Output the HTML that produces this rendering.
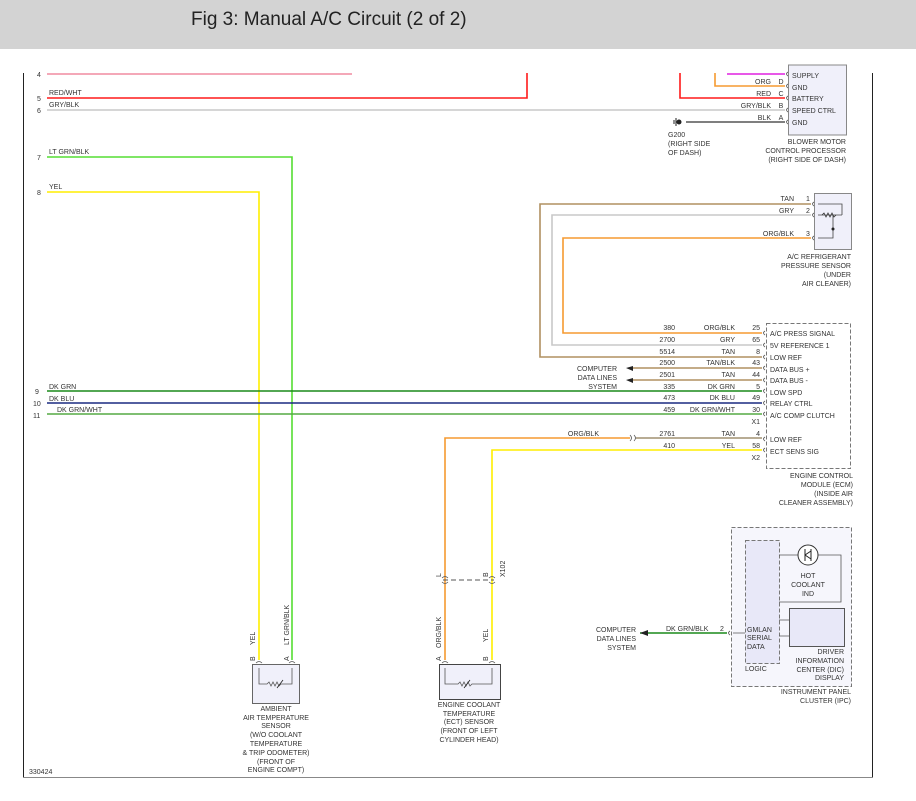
<!DOCTYPE html>
<html><head><meta charset="utf-8"><style>
html,body{margin:0;padding:0;background:#fff;width:916px;height:801px;overflow:hidden}
.hdr{position:absolute;left:0;top:0;width:916px;height:49px;background:#d3d3d3}
.hdr span{position:absolute;left:191px;top:9px;font:19px "Liberation Sans",sans-serif;color:#222}
svg{position:absolute;left:0;top:0}
text{font-family:"Liberation Sans",sans-serif;font-size:7px;fill:#333}
</style></head><body>
<div class="hdr"><span>Fig 3: Manual A/C Circuit (2 of 2)</span></div>
<svg width="916" height="801" viewBox="0 0 916 801">
<line x1="23.5" y1="73" x2="23.5" y2="777" stroke="#222" stroke-width="1"/>
<line x1="872.5" y1="73" x2="872.5" y2="777" stroke="#222" stroke-width="1"/>
<line x1="23" y1="777.5" x2="873" y2="777.5" stroke="#888" stroke-width="1"/>
<g fill="none" stroke-width="1.6">
<path d="M47 74H352" stroke="#f08ca0"/>
<path d="M47 98H527V73" stroke="#ff1a1a"/>
<path d="M47 110H785" stroke="#c8c8c8"/>
<path d="M47 157H292V660" stroke="#55dd33"/>
<path d="M47 192H259V660" stroke="#ffee00"/>
<path d="M680 73V98H785" stroke="#ff1a1a"/>
<path d="M715 73V86H785" stroke="#f59a30"/>
<path d="M727 74H785" stroke="#e020e0"/>
<path d="M686 122H785" stroke="#555"/>
<path d="M811 204H540V357H762" stroke="#b09060"/>
<path d="M811 215H552V345H762" stroke="#c8c8c8"/>
<path d="M811 238H563V333H762" stroke="#f59a30"/>
<path d="M632 368H762M632 380H762" stroke="#b09060"/>
<path d="M47 391H762" stroke="#1a8a1a"/>
<path d="M47 403H762" stroke="#1a2a80"/>
<path d="M47 414H762" stroke="#55aa44"/>
<path d="M445 660V438H630" stroke="#f59a30"/>
<path d="M636 438H762" stroke="#a09070"/>
<path d="M492 660V450H762" stroke="#ffee00"/>
<path d="M640 633H727" stroke="#1a8a1a"/>
</g>
<g fill="none" stroke="#555" stroke-width="0.8">
<path d="M788 72q-3 2 0 4M788 84q-3 2 0 4M788 96q-3 2 0 4M788 108q-3 2 0 4M788 120q-3 2 0 4"/>
<path d="M814 202q-3 2 0 4M814 213q-3 2 0 4M814 236q-3 2 0 4"/>
<path d="M765 331q-3 2 0 4M765 343q-3 2 0 4M765 355q-3 2 0 4M765 366q-3 2 0 4M765 378q-3 2 0 4M765 389q-3 2 0 4M765 401q-3 2 0 4M765 412q-3 2 0 4M765 437q-3 2 0 4M765 448q-3 2 0 4"/>
<path d="M630 435q3 3 0 6M634 435q3 3 0 6"/>
<path d="M442 578q3 -3 6 0M442 582q3 3 6 0M489 578q3 -3 6 0M489 582q3 3 6 0"/>
<path d="M256 663q3 -3 6 0M289 663q3 -3 6 0M442 663q3 -3 6 0M489 663q3 -3 6 0"/>
</g>
<circle cx="679" cy="122" r="2.5" fill="#222"/><path d="M676 118V126M674 120V124" stroke="#222"/>
<rect x="788.5" y="65" width="58" height="70" fill="#f0f0fa" stroke="#888"/>
<rect x="814.5" y="193.5" width="37" height="56" fill="#f0f0fa" stroke="#888"/>
<path d="M818 204H842V215M818 215H842M833 215V238H818" fill="none" stroke="#444" stroke-width="0.8"/>
<path d="M822 215l2 -2 2 4 2 -4 2 4 2 -4 2 4 2 -2" fill="none" stroke="#333" stroke-width="0.8"/>
<circle cx="833" cy="229" r="1.5" fill="#222"/>
<rect x="766.5" y="323.5" width="84" height="145" fill="none" stroke="#777" stroke-dasharray="4,2"/>
<path d="M443 580H494" stroke="#555" stroke-dasharray="5,3"/>
<rect x="252.5" y="664.5" width="47" height="39" fill="#f0f0fa" stroke="#666"/>
<rect x="439.5" y="664.5" width="61" height="35" fill="#f0f0fa" stroke="#444"/>
<g fill="none" stroke="#555" stroke-width="0.8">
<path d="M259 668V684H267l2 -2 2 4 2 -4 2 4 2 -4 2 4 2 -2H292V668"/>
<path d="M445 668V684H458l2 -2 2 4 2 -4 2 4 2 -4 2 4 2 -2H492V668"/>
<path d="M277 688l6 -8M464 688l6 -8" stroke="#222"/>
</g>
<rect x="731.5" y="527.5" width="120" height="159" fill="#f6f6fc" stroke="#777" stroke-dasharray="4,2"/>
<rect x="745.5" y="540.5" width="34" height="123" fill="#e8e8f8" stroke="#777" stroke-dasharray="4,2"/>
<path d="M779 555H841V602H779M779 620H789M779 636H789M733 633H745" fill="none" stroke="#555" stroke-width="0.8"/>
<path d="M730 631q-3 2 0 4" fill="none" stroke="#555" stroke-width="0.8"/>
<circle cx="808" cy="555" r="10" fill="#fff" stroke="#333"/>
<path d="M805 549V561M811 549V561M805 555L811 551M805 555L811 559" fill="none" stroke="#222" stroke-width="1"/>
<rect x="789.5" y="608.5" width="55" height="38" fill="#e8e8f8" stroke="#555"/>
<path d="M633 366L626 368L633 371ZM633 378L626 380L633 383ZM648 630L640 633L648 636Z" fill="#222"/>
<text x="37" y="77">4</text><text x="37" y="101">5</text><text x="37" y="113">6</text>
<text x="37" y="160">7</text><text x="37" y="195">8</text><text x="35" y="394">9</text>
<text x="33" y="406">10</text><text x="33" y="418">11</text>
<text x="49" y="95">RED/WHT</text><text x="49" y="107">GRY/BLK</text>
<text x="49" y="154">LT GRN/BLK</text><text x="49" y="189">YEL</text>
<text x="49" y="389">DK GRN</text><text x="49" y="401">DK BLU</text><text x="57" y="412">DK GRN/WHT</text>
<text x="792" y="78">SUPPLY</text><text x="792" y="90">GND</text><text x="792" y="101">BATTERY</text>
<text x="792" y="113">SPEED CTRL</text><text x="792" y="125">GND</text>
<text x="771" y="84" text-anchor="end">ORG</text><text x="771" y="96" text-anchor="end">RED</text>
<text x="771" y="108" text-anchor="end">GRY/BLK</text><text x="771" y="120" text-anchor="end">BLK</text>
<text x="781" y="84" text-anchor="middle">D</text><text x="781" y="96" text-anchor="middle">C</text>
<text x="781" y="108" text-anchor="middle">B</text><text x="781" y="120" text-anchor="middle">A</text>
<text x="668" y="137">G200</text><text x="668" y="146">(RIGHT SIDE</text><text x="668" y="155">OF DASH)</text>
<text x="846" y="144" text-anchor="end">BLOWER MOTOR</text><text x="846" y="153" text-anchor="end">CONTROL PROCESSOR</text><text x="846" y="162" text-anchor="end">(RIGHT SIDE OF DASH)</text>
<text x="794" y="201" text-anchor="end">TAN</text><text x="794" y="213" text-anchor="end">GRY</text><text x="794" y="236" text-anchor="end">ORG/BLK</text>
<text x="806" y="201">1</text><text x="806" y="213">2</text><text x="806" y="236">3</text>
<text x="851" y="259" text-anchor="end">A/C REFRIGERANT</text><text x="851" y="268" text-anchor="end">PRESSURE SENSOR</text><text x="851" y="277" text-anchor="end">(UNDER</text><text x="851" y="286" text-anchor="end">AIR CLEANER)</text>
<text x="675" y="330" text-anchor="end">380</text><text x="675" y="342" text-anchor="end">2700</text><text x="675" y="354" text-anchor="end">5514</text>
<text x="675" y="365" text-anchor="end">2500</text><text x="675" y="377" text-anchor="end">2501</text><text x="675" y="389" text-anchor="end">335</text>
<text x="675" y="400" text-anchor="end">473</text><text x="675" y="412" text-anchor="end">459</text>
<text x="675" y="436" text-anchor="end">2761</text><text x="675" y="448" text-anchor="end">410</text>
<text x="735" y="330" text-anchor="end">ORG/BLK</text><text x="735" y="342" text-anchor="end">GRY</text><text x="735" y="354" text-anchor="end">TAN</text>
<text x="735" y="365" text-anchor="end">TAN/BLK</text><text x="735" y="377" text-anchor="end">TAN</text><text x="735" y="389" text-anchor="end">DK GRN</text>
<text x="735" y="400" text-anchor="end">DK BLU</text><text x="735" y="412" text-anchor="end">DK GRN/WHT</text>
<text x="735" y="436" text-anchor="end">TAN</text><text x="735" y="448" text-anchor="end">YEL</text>
<text x="760" y="330" text-anchor="end">25</text><text x="760" y="342" text-anchor="end">65</text><text x="760" y="354" text-anchor="end">8</text>
<text x="760" y="365" text-anchor="end">43</text><text x="760" y="377" text-anchor="end">44</text><text x="760" y="389" text-anchor="end">5</text>
<text x="760" y="400" text-anchor="end">49</text><text x="760" y="412" text-anchor="end">30</text><text x="760" y="424" text-anchor="end">X1</text>
<text x="760" y="436" text-anchor="end">4</text><text x="760" y="448" text-anchor="end">58</text><text x="760" y="460" text-anchor="end">X2</text>
<text x="770" y="336">A/C PRESS SIGNAL</text><text x="770" y="348">5V REFERENCE 1</text><text x="770" y="360">LOW REF</text>
<text x="770" y="372">DATA BUS +</text><text x="770" y="383">DATA BUS -</text><text x="770" y="395">LOW SPD</text>
<text x="770" y="406">RELAY CTRL</text><text x="770" y="418">A/C COMP CLUTCH</text>
<text x="770" y="442">LOW REF</text><text x="770" y="454">ECT SENS SIG</text>
<text x="617" y="371" text-anchor="end">COMPUTER</text><text x="617" y="380" text-anchor="end">DATA LINES</text><text x="617" y="389" text-anchor="end">SYSTEM</text>
<text x="599" y="436" text-anchor="end">ORG/BLK</text>
<text x="853" y="478" text-anchor="end">ENGINE CONTROL</text><text x="853" y="487" text-anchor="end">MODULE (ECM)</text><text x="853" y="496" text-anchor="end">(INSIDE AIR</text><text x="853" y="505" text-anchor="end">CLEANER ASSEMBLY)</text>
<text x="808" y="578" text-anchor="middle">HOT</text><text x="808" y="587" text-anchor="middle">COOLANT</text><text x="808" y="596" text-anchor="middle">IND</text>
<text x="747" y="632">GMLAN</text><text x="747" y="640">SERIAL</text><text x="747" y="649">DATA</text><text x="745" y="671">LOGIC</text>
<text x="844" y="654" text-anchor="end">DRIVER</text><text x="844" y="663" text-anchor="end">INFORMATION</text><text x="844" y="672" text-anchor="end">CENTER (DIC)</text><text x="844" y="680" text-anchor="end">DISPLAY</text>
<text x="851" y="694" text-anchor="end">INSTRUMENT PANEL</text><text x="851" y="703" text-anchor="end">CLUSTER (IPC)</text>
<text x="636" y="632" text-anchor="end">COMPUTER</text><text x="636" y="641" text-anchor="end">DATA LINES</text><text x="636" y="650" text-anchor="end">SYSTEM</text>
<text x="666" y="631">DK GRN/BLK</text><text x="720" y="631">2</text>
<text x="276" y="711" text-anchor="middle">AMBIENT</text><text x="276" y="720" text-anchor="middle">AIR TEMPERATURE</text><text x="276" y="728" text-anchor="middle">SENSOR</text>
<text x="276" y="737" text-anchor="middle">(W/O COOLANT</text><text x="276" y="746" text-anchor="middle">TEMPERATURE</text><text x="276" y="755" text-anchor="middle">&amp; TRIP ODOMETER)</text>
<text x="276" y="764" text-anchor="middle">(FRONT OF</text><text x="276" y="772" text-anchor="middle">ENGINE COMPT)</text>
<text x="469" y="707" text-anchor="middle">ENGINE COOLANT</text><text x="469" y="716" text-anchor="middle">TEMPERATURE</text><text x="469" y="724" text-anchor="middle">(ECT) SENSOR</text>
<text x="469" y="733" text-anchor="middle">(FRONT OF LEFT</text><text x="469" y="742" text-anchor="middle">CYLINDER HEAD)</text>
<text x="29" y="774">330424</text>
<text transform="translate(255,645) rotate(-90)">YEL</text>
<text transform="translate(289,645) rotate(-90)">LT GRN/BLK</text>
<text transform="translate(441,648) rotate(-90)">ORG/BLK</text>
<text transform="translate(488,642) rotate(-90)">YEL</text>
<text transform="translate(255,661) rotate(-90)">B</text><text transform="translate(289,661) rotate(-90)">A</text>
<text transform="translate(441,661) rotate(-90)">A</text><text transform="translate(488,661) rotate(-90)">B</text>
<text transform="translate(441,577) rotate(-90)">L</text><text transform="translate(488,577) rotate(-90)">B</text>
<text transform="translate(505,577) rotate(-90)">X102</text>
</svg>
</body></html>
